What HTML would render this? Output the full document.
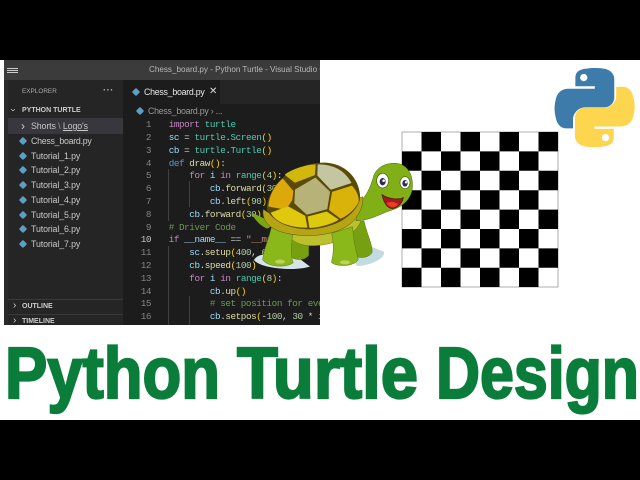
<!DOCTYPE html>
<html><head><meta charset="utf-8"><style>
html,body{margin:0;padding:0;background:#000}
#p{position:relative;width:640px;height:480px;overflow:hidden;background:#000}
#w{position:absolute;left:0;top:60px;width:640px;height:360px;background:#fff}
#vs{position:absolute;left:4px;top:60px;width:316px;height:265px;background:#1c1c1c;overflow:hidden;filter:blur(.3px)}
.a{position:absolute;white-space:pre;line-height:12px;font-family:"Liberation Sans",sans-serif}
.f{color:#c8c8c8;font-size:8.8px;left:27px;letter-spacing:-.1px}
.ic{position:absolute;width:6px;height:6px;background:#5a9fc4;transform:rotate(45deg);border-radius:1.5px}
.c{position:absolute;left:164.7px;white-space:pre;font:9.3px/12px "Liberation Mono",monospace;letter-spacing:-.43px;color:#d4d4d4}
.n{position:absolute;left:119px;width:28px;text-align:right;font:9.3px/12px "Liberation Mono",monospace;letter-spacing:-.43px;color:#858585}
.k{color:#c586c0}.d{color:#569cd6}.t{color:#4ec9b0}.v{color:#9cdcfe}.y{color:#dcdcaa}.g{color:#ffd700}.m{color:#6a9955}.s{color:#ce9178}.u{color:#b5cea8}
.ln{position:absolute;width:1px;background:#404040}
.pl path{stroke-width:4;stroke-linejoin:round}
</style></head><body><div id="p">
<div id="w"></div>
<div id="vs">
<div style="position:absolute;left:0;top:0;width:316px;height:20px;background:#3b3b3b"></div>
<div style="position:absolute;left:0;top:20px;width:4px;height:245px;background:#2a2a2a"></div>
<div style="position:absolute;left:4px;top:20px;width:115px;height:245px;background:#252526"></div>
<div style="position:absolute;left:119px;top:20px;width:197px;height:24px;background:#252526"></div>
<div style="position:absolute;left:119px;top:20px;width:97px;height:24px;background:#1c1c1c"></div>
<div style="position:absolute;left:4px;top:58px;width:115px;height:16px;background:#37373d"></div>
<div style="position:absolute;left:4px;top:239px;width:115px;height:1px;background:#3a3a3a"></div>
<div style="position:absolute;left:4px;top:254px;width:115px;height:1px;background:#3a3a3a"></div>
<div style="position:absolute;left:3px;top:8px;width:11px;height:1px;background:#ccc;box-shadow:0 2px 0 #ccc,0 4px 0 #ccc"></div>
<div class="a" style="left:145px;top:4px;font-size:8.1px;color:#b8b8b8">Chess_board.py - Python Turtle - Visual Studio Code</div>
<div class="a" style="left:18px;top:26px;font-size:6.4px;color:#aaa">EXPLORER</div>
<div class="a" style="left:99px;top:24px;font-size:9px;font-weight:bold;color:#bbb;letter-spacing:.6px">···</div>
<div class="a" style="left:18px;top:45px;font-size:7px;font-weight:bold;color:#ccc">PYTHON TURTLE</div>
<div class="a" style="left:8px;top:44px;font-size:8px;color:#ccc;transform:rotate(90deg) scaleY(1.3)">›</div>
<div class="a" style="left:17px;top:60px;font-size:12px;color:#ccc">›</div>
<div class="a f" style="top:60px">Shorts <span style="color:#999">\</span> <span style="text-decoration:underline">Logo's</span></div>
<div class="ic" style="left:16px;top:78px"></div><div class="a f" style="top:75px;letter-spacing:-.25px">Chess_board.py</div>
<div class="ic" style="left:16px;top:93px"></div><div class="a f" style="top:90px">Tutorial_1.py</div>
<div class="ic" style="left:16px;top:107px"></div><div class="a f" style="top:104px">Tutorial_2.py</div>
<div class="ic" style="left:16px;top:122px"></div><div class="a f" style="top:119px">Tutorial_3.py</div>
<div class="ic" style="left:16px;top:137px"></div><div class="a f" style="top:134px">Tutorial_4.py</div>
<div class="ic" style="left:16px;top:152px"></div><div class="a f" style="top:149px">Tutorial_5.py</div>
<div class="ic" style="left:16px;top:166px"></div><div class="a f" style="top:163px">Tutorial_6.py</div>
<div class="ic" style="left:16px;top:181px"></div><div class="a f" style="top:178px">Tutorial_7.py</div>
<div class="a" style="left:9px;top:240px;font-size:10px;color:#ccc">›</div>
<div class="a" style="left:18px;top:241px;font-size:7px;font-weight:bold;color:#ccc">OUTLINE</div>
<div class="a" style="left:9px;top:255px;font-size:10px;color:#ccc">›</div>
<div class="a" style="left:18px;top:256px;font-size:7px;font-weight:bold;color:#ccc">TIMELINE</div>
<div class="ic" style="left:129px;top:29px"></div>
<div class="a" style="left:140px;top:26px;font-size:8.8px;letter-spacing:-.25px;color:#e8e8e8">Chess_board.py</div>
<div class="a" style="left:205px;top:26px;font-size:10px;color:#ddd">✕</div>
<div class="ic" style="left:133px;top:48px"></div>
<div class="a" style="left:144px;top:45px;font-size:8.8px;letter-spacing:-.25px;color:#999">Chess_board.py <span>›</span> ...</div>
<div class="ln" style="left:164px;top:109px;height:52px"></div>
<div class="ln" style="left:185px;top:121px;height:26px"></div>
<div class="ln" style="left:164px;top:186px;height:79px"></div>
<div class="ln" style="left:185px;top:236px;height:29px"></div>
<div class="n" style="top:59px">1</div><div class="c" style="top:59px"><span class="k">import</span> <span class="t">turtle</span></div>
<div class="n" style="top:72px">2</div><div class="c" style="top:72px"><span class="v">sc</span> = <span class="t">turtle</span>.<span class="t">Screen</span><span class="g">()</span></div>
<div class="n" style="top:85px">3</div><div class="c" style="top:85px"><span class="v">cb</span> = <span class="t">turtle</span>.<span class="t">Turtle</span><span class="g">()</span></div>
<div class="n" style="top:98px">4</div><div class="c" style="top:98px"><span class="d">def</span> <span class="y">draw</span><span class="g">()</span>:</div>
<div class="n" style="top:110px">5</div><div class="c" style="top:110px">    <span class="k">for</span> <span class="v">i</span> <span class="k">in</span> <span class="t">range</span><span class="g">(</span><span class="u">4</span><span class="g">)</span>:</div>
<div class="n" style="top:123px">6</div><div class="c" style="top:123px">        <span class="v">cb</span>.<span class="y">forward</span><span class="g">(</span><span class="u">30</span><span class="g">)</span></div>
<div class="n" style="top:136px">7</div><div class="c" style="top:136px">        <span class="v">cb</span>.<span class="y">left</span><span class="g">(</span><span class="u">90</span><span class="g">)</span></div>
<div class="n" style="top:149px">8</div><div class="c" style="top:149px">    <span class="v">cb</span>.<span class="y">forward</span><span class="g">(</span><span class="u">30</span><span class="g">)</span></div>
<div class="n" style="top:162px">9</div><div class="c" style="top:162px"><span class="m"># Driver Code</span></div>
<div class="n" style="top:174px;color:#c6c6c6">10</div><div class="c" style="top:174px"><span class="k">if</span> <span class="v">__name__</span> == <span class="s">"__main__"</span>:</div>
<div class="n" style="top:187px">11</div><div class="c" style="top:187px">    <span class="v">sc</span>.<span class="y">setup</span><span class="g">(</span><span class="u">400</span>, <span class="u">600</span><span class="g">)</span></div>
<div class="n" style="top:200px">12</div><div class="c" style="top:200px">    <span class="v">cb</span>.<span class="y">speed</span><span class="g">(</span><span class="u">100</span><span class="g">)</span></div>
<div class="n" style="top:213px">13</div><div class="c" style="top:213px">    <span class="k">for</span> <span class="v">i</span> <span class="k">in</span> <span class="t">range</span><span class="g">(</span><span class="u">8</span><span class="g">)</span>:</div>
<div class="n" style="top:226px">14</div><div class="c" style="top:226px">        <span class="v">cb</span>.<span class="y">up</span><span class="g">()</span></div>
<div class="n" style="top:238px">15</div><div class="c" style="top:238px">        <span class="m"># set position for every row</span></div>
<div class="n" style="top:251px">16</div><div class="c" style="top:251px">        <span class="v">cb</span>.<span class="y">setpos</span><span class="g">(</span>-<span class="u">100</span>, <span class="u">30</span> * <span class="v">i</span><span class="g">)</span></div>
</div>
<svg width="640" height="480" viewBox="0 0 640 480" style="position:absolute;left:0;top:0">
<g transform="translate(402,132)">
<rect x="0" y="0" width="156" height="155" fill="#fff" stroke="#999" stroke-width=".8"/>
<g fill="#000">
<path d="M19.5 0h19.5v19.4h-19.5zM58.5 0h19.5v19.4h-19.5zM97.500 0h19.500v19.4h-19.500zM136.500 0h19.500v19.4h-19.500z"/>
<path d="M0 19.400h19.500v19.400h-19.500zM39 19.400h19.500v19.400h-19.500zM78 19.400h19.500v19.400h-19.500zM117 19.400h19.500v19.400h-19.500z"/>
<path d="M19.5 38.800h19.500v19.400h-19.500zM58.500 38.800h19.500v19.400h-19.500zM97.500 38.800h19.500v19.400h-19.500zM136.500 38.800h19.500v19.400h-19.500z"/>
<path d="M0 58.200h19.500v19.400h-19.500zM39 58.200h19.500v19.400h-19.500zM78 58.200h19.500v19.400h-19.500zM117 58.200h19.500v19.400h-19.500z"/>
<path d="M19.5 77.600h19.500v19.400h-19.500zM58.500 77.600h19.500v19.400h-19.500zM97.500 77.600h19.500v19.400h-19.500zM136.500 77.600h19.500v19.400h-19.500z"/>
<path d="M0 97h19.500v19.400h-19.500zM39 97h19.500v19.400h-19.500zM78 97h19.500v19.400h-19.500zM117 97h19.500v19.400h-19.500z"/>
<path d="M19.5 116.400h19.500v19.300h-19.500zM58.500 116.400h19.500v19.300h-19.500zM97.500 116.400h19.500v19.300h-19.500zM136.500 116.400h19.500v19.300h-19.500z"/>
<path d="M0 135.700h19.500v19.300h-19.500zM39 135.700h19.500v19.300h-19.500zM78 135.700h19.500v19.300h-19.500zM117 135.700h19.500v19.300h-19.500z"/>
</g></g>
<g transform="translate(555,68) scale(.715)">
<path fill="#3d7bab" d="M54.900 0C50.300 0 46 .4 42.100 1.100 30.600 3.100 28.500 7.400 28.500 15.300V25.600H55.700V29H18.300C10.400 29 3.500 33.800 1.300 42.900-1.200 53.300-1.300 59.800 1.300 70.600 3.200 78.700 7.900 84.400 15.800 84.400H25.200V72C25.200 63 33 55 42.100 55H69.300C76.900 55 82.900 48.800 82.900 41.300V15.300C82.900 7.900 76.700 2.400 69.300 1.100 64.600 .3 59.700 0 54.900 0ZM40.200 8.300A5.100 5.100 0 1 1 40.200 18.500 5.100 5.100 0 1 1 40.200 8.300Z" fill-rule="evenodd"/>
<path fill="#fdd54f" transform="rotate(180 55.400 55.400)" d="M54.900 0C50.300 0 46 .4 42.100 1.100 30.600 3.100 28.500 7.400 28.500 15.300V25.600H55.700V29H18.300C10.400 29 3.500 33.800 1.300 42.900-1.200 53.300-1.300 59.800 1.300 70.600 3.200 78.700 7.900 84.400 15.800 84.400H25.200V72C25.200 63 33 55 42.100 55H69.300C76.900 55 82.900 48.800 82.900 41.300V15.300C82.900 7.900 76.700 2.400 69.300 1.100 64.600 .3 59.700 0 54.900 0ZM40.200 8.300A5.100 5.100 0 1 1 40.200 18.500 5.100 5.100 0 1 1 40.200 8.300Z" fill-rule="evenodd"/>
</g>
<g transform="translate(230,150) scale(.3333)">
<path fill="#d5e4ea" d="M72 330C85 308 120 310 190 312L240 350C190 365 90 355 72 330Z"/>
<path fill="#c3dae3" d="M380 348C420 348 468 325 462 305L410 285 370 310Z"/>
<path fill="#7aa612" d="M65 190C85 195 105 205 130 225L112 236C90 228 75 210 65 190Z"/>
<path fill="#76a010" stroke="#55770c" stroke-width="1.500" d="M178 258H236V316C225 332 195 332 182 320Z"/>
<path fill="#76a010" stroke="#55770c" stroke-width="1.500" d="M360 225L402 212C410 250 430 290 426 308 415 326 385 326 368 315Z"/>
<path fill="#bcc02e" stroke="#6f7410" stroke-width="1.500" d="M165 238L395 205C385 250 320 287 245 287 205 287 175 270 165 238Z"/>
<path fill="#8ab81a" stroke="#55770c" stroke-width="1.500" d="M125 228L190 248C180 290 184 325 190 338 170 354 115 352 98 330 100 300 118 265 125 228Z"/>
<path fill="#8ab81a" stroke="#55770c" stroke-width="1.500" d="M305 250L368 230C370 270 378 305 385 328 375 350 320 352 304 337 312 310 311 280 305 250Z"/>
<ellipse cx="150" cy="335" rx="15" ry="6" fill="#bcd25a"/><ellipse cx="345" cy="337" rx="15" ry="6" fill="#bcd25a"/>
<path fill="#80b016" stroke="#456208" stroke-width="1.500" d="M378 212C385 185 378 170 395 150 415 130 425 100 432 75 445 45 480 35 510 42 540 52 550 85 547 115 543 150 515 172 480 182 450 192 420 212 378 212Z"/>
<path fill="#a8191a" stroke="#3c1408" stroke-width="2" d="M456 134C478 148 505 150 520 143 516 165 495 178 482 175 468 170 460 152 456 134Z"/>
<path fill="#ee3a2a" d="M470 160C480 153 495 155 505 163 495 174 480 176 470 160Z"/>
<ellipse cx="458" cy="92" rx="18" ry="22" fill="#fff" stroke="#3c5a08" stroke-width="2"/>
<ellipse cx="458" cy="95" rx="9" ry="11" fill="#2e2a5c"/><circle cx="461" cy="92" r="4" fill="#fff"/>
<ellipse cx="525" cy="98" rx="15" ry="18" fill="#fff" stroke="#3c5a08" stroke-width="2"/>
<ellipse cx="525" cy="100" rx="8" ry="10" fill="#2e2a5c"/><circle cx="528" cy="97" r="3.500" fill="#fff"/>
<path fill="#b5a514" stroke="#5b5008" stroke-width="1.500" d="M100 178C94 208 115 238 170 250 240 266 325 254 365 218 388 196 402 165 398 140L380 148C368 178 340 205 300 212 230 226 150 214 100 178Z"/>
<path fill="#5a4a06" d="M110 178C113 110 180 40 280 38 352 38 394 95 390 150 372 198 322 232 240 238 180 238 128 216 110 178Z"/>
<g class="pl">
<path fill="#dca80a" stroke="#dca80a" d="M117 168C120 135 137 107 158 88L188 124 185 150 166 177Z"/>
<path fill="#d2b80c" stroke="#d2b80c" d="M167 74C190 58 225 47 255 45L253 74 195 96Z"/>
<path fill="#c3c6a0" stroke="#c3c6a0" d="M265 45C310 45 343 64 362 98L303 117 264 76Z"/>
<path fill="#b7b278" stroke="#b7b278" d="M197 120L256 85 298 126 290 176 231 192 195 159Z"/>
<path fill="#d9b20a" stroke="#d9b20a" d="M308 127L365 109C380 125 386 145 384 155 373 178 350 196 332 204L299 179Z"/>
<path fill="#e0c80e" stroke="#e0c80e" d="M125 189L174 171 224 199 230 231C190 231 142 220 125 189Z"/>
<path fill="#ddc90e" stroke="#ddc90e" d="M235 201L290 187 323 209C300 222 265 231 240 232Z"/>
</g>
</g>
<g font-family="Liberation Sans, sans-serif" font-weight="bold" font-size="72" fill="#0b7d3a" stroke="#0b7d3a" stroke-width="2.200">
<text x="5" y="398" textLength="215" lengthAdjust="spacingAndGlyphs">Python</text>
<text x="237" y="398" textLength="181" lengthAdjust="spacingAndGlyphs">Turtle</text>
<text x="436" y="398" textLength="203" lengthAdjust="spacingAndGlyphs">Design</text>
</g>
</svg>
</div></body></html>
